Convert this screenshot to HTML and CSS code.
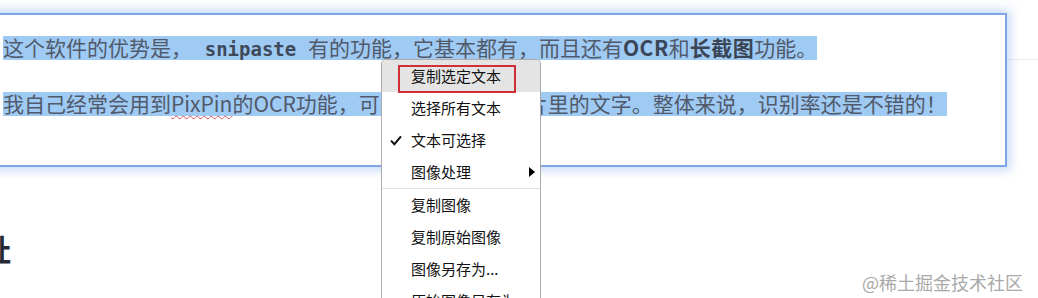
FILE: index.html
```html
<!DOCTYPE html>
<html lang="zh-CN">
<head>
<meta charset="utf-8">
<title>PixPin</title>
<link rel="stylesheet" href="styles.css">
</head>
<body>
<div class="page">
  <div class="topbar"></div>
  <h2 class="heading">地址</h2>
</div>

<div class="pin">
  <p class="para"><span class="sel">这个软件的优势是， <code class="code">snipaste</code> 有的功能，它基本都有，而且还有<strong class="strong">OCR</strong>和<strong class="strong">长截图</strong>功能。</span></p>
  <p class="para para-2"><span class="sel">我自己经常会用到<span class="typo">PixPin</span>的OCR功能，可以直接识别出图片里的文字。整体来说，识别率还是不错的！</span></p>
</div>

<ul class="menu">
  <li class="item hover"><span class="gutter"></span><span class="label">复制选定文本</span></li>
  <li class="item"><span class="gutter"></span><span class="label">选择所有文本</span></li>
  <li class="item"><span class="gutter"><svg class="check" width="12" height="11" viewBox="0 0 12 11"><path d="M1 5.6 L4.4 9.2 L11 1.4" fill="none" stroke="#111" stroke-width="2"/></svg></span><span class="label">文本可选择</span></li>
  <li class="item"><span class="gutter"></span><span class="label">图像处理</span><span class="arrow"></span></li>
  <li class="sep"></li>
  <li class="item"><span class="gutter"></span><span class="label">复制图像</span></li>
  <li class="item"><span class="gutter"></span><span class="label">复制原始图像</span></li>
  <li class="item"><span class="gutter"></span><span class="label">图像另存为...</span></li>
  <li class="item"><span class="gutter"></span><span class="label">原始图像另存为...</span></li>
</ul>

<div class="mark"></div>

<div class="watermark">@稀土掘金技术社区</div>
</body>
</html>
```

FILE: styles.css
```css
html, body {
  margin: 0;
  padding: 0;
}

body {
  width: 1038px;
  height: 298px;
  overflow: hidden;
  position: relative;
  background: #ffffff;
  font-family: "Noto Sans CJK SC", "Noto Sans", sans-serif;
}

/* underlying page */
.topbar {
  height: 59px;
  border-bottom: 1px solid #ececec;
}

.heading {
  margin: 168px 0 0 -49px;
  font-size: 30px;
  line-height: 40px;
  font-weight: 700;
  color: #252933;
  white-space: nowrap;
}

/* pinned screenshot window */
.pin {
  position: absolute;
  left: -12px;
  top: 13px;
  width: 1019px;
  height: 154px;
  box-sizing: border-box;
  background: #ffffff;
  border: 2px solid #7ea6e6;
  box-shadow: 0 0 10px 3px rgba(140, 180, 240, 0.5);
  padding: 20px 0 0 13px;
}

.para {
  margin: 0;
  font-size: 21px;
  line-height: 24px;
  color: #515a6b;
  white-space: nowrap;
}

.para-2 {
  margin-top: 30px;
}

.sel {
  background: linear-gradient(to bottom,
    transparent 0, transparent 4px,
    #9fcaf4 4px, #9fcaf4 calc(100% - 2px),
    transparent calc(100% - 2px));
}

.code {
  font-family: "DejaVu Sans Mono", "Liberation Mono", monospace;
  font-size: 19px;
  font-weight: 700;
  color: #3e4a5a;
  padding: 0 7px 0 8px;
}

.strong {
  font-weight: 700;
  color: #3a4656;
  letter-spacing: 0.5px;
}

.typo {
  text-decoration: underline wavy #d9534f;
  text-decoration-thickness: 1px;
  text-underline-offset: 3px;
}

/* context menu */
.menu {
  position: absolute;
  left: 381px;
  top: 59px;
  width: 160px;
  box-sizing: border-box;
  margin: 0;
  padding: 0;
  list-style: none;
  background: #ffffff;
  border: 1px solid #ababab;
  border-bottom: none;
  border-radius: 5px 5px 0 0;
  font-size: 15px;
  color: #111111;
  overflow: hidden;
}

.item {
  display: flex;
  align-items: center;
  height: 32px;
  padding: 0 5px 0 8px;
  white-space: nowrap;
}

.item.hover {
  background: #e4e4e4;
}

.gutter {
  width: 21px;
  flex: none;
  display: flex;
  align-items: center;
}

.label {
  line-height: 32px;
}

.arrow {
  margin-left: auto;
  width: 0;
  height: 0;
  border-left: 6px solid #000000;
  border-top: 5px solid transparent;
  border-bottom: 5px solid transparent;
}

.sep {
  height: 1px;
  background: #e2e2e2;
}

/* red annotation box */
.mark {
  position: absolute;
  left: 398px;
  top: 65px;
  width: 118px;
  height: 28px;
  box-sizing: border-box;
  border: 2px solid #cf3038;
}

/* watermark */
.watermark {
  position: absolute;
  left: 862px;
  top: 270px;
  font-size: 18px;
  line-height: 24px;
  color: #a9a9a9;
  white-space: nowrap;
}
```
